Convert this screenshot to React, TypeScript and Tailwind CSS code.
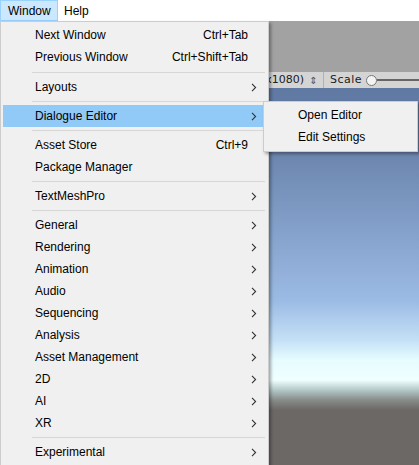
import React from "react";

type Item =
  | { type: "item"; label: string; shortcut?: string; sub?: boolean; active?: boolean }
  | { type: "sep"; h?: string };

const items: Item[] = [
  { type: "item", label: "Next Window", shortcut: "Ctrl+Tab" },
  { type: "item", label: "Previous Window", shortcut: "Ctrl+Shift+Tab" },
  { type: "sep", h: "h-[8px]" },
  { type: "item", label: "Layouts", sub: true },
  { type: "sep" },
  { type: "item", label: "Dialogue Editor", sub: true, active: true },
  { type: "sep" },
  { type: "item", label: "Asset Store", shortcut: "Ctrl+9" },
  { type: "item", label: "Package Manager" },
  { type: "sep" },
  { type: "item", label: "TextMeshPro", sub: true },
  { type: "sep" },
  { type: "item", label: "General", sub: true },
  { type: "item", label: "Rendering", sub: true },
  { type: "item", label: "Animation", sub: true },
  { type: "item", label: "Audio", sub: true },
  { type: "item", label: "Sequencing", sub: true },
  { type: "item", label: "Analysis", sub: true },
  { type: "item", label: "Asset Management", sub: true },
  { type: "item", label: "2D", sub: true },
  { type: "item", label: "AI", sub: true },
  { type: "item", label: "XR", sub: true },
  { type: "sep" },
  { type: "item", label: "Experimental", sub: true },
];

function Chevron() {
  return (
    <svg width="6" height="9" viewBox="0 0 6 9" className="block">
      <path d="M1 0.8 L4.6 4.5 L1 8.2" fill="none" stroke="#333" strokeWidth="1.1" />
    </svg>
  );
}

export default function App() {
  return (
    <div
      className="relative w-[419px] h-[465px] overflow-hidden bg-[#a2a2a2] text-[12px] text-black"
      style={{ fontFamily: '"Liberation Sans", Arial, sans-serif' }}
    >
      {/* menu bar */}
      <div className="flex h-[21px] bg-white items-stretch">
        <div className="flex items-center w-[58px] pl-[7px] bg-[#cce8ff] border border-[#99d1ff]">Window</div>
        <div className="flex items-center pl-[6px]">Help</div>
      </div>

      {/* background editor */}
      <div className="h-[51px] bg-[#a2a2a2]" />
      <div className="flex h-[16px] items-center bg-[#d4d4d4] text-[11px] text-[#202020]" style={{ fontFamily: '"DejaVu Sans", sans-serif' }}>
        <div className="w-[304px] overflow-hidden whitespace-nowrap text-right">Free Aspect (1920x1080)</div>
        <div className="w-[19px] text-center text-[10px] text-[#555]">⇕</div>
        <div className="h-full border-l border-[#b0b0b0]" />
        <div className="pl-[6px] tracking-[0.5px]">Scale</div>
        <div className="ml-[4px] w-[11px] h-[11px] rounded-full bg-[#f4f4f4] border border-[#777]" />
        <div className="flex-1 h-[2px] bg-[#666]" />
      </div>
      <div className="h-[377px] bg-[linear-gradient(to_bottom,#5f79a2_0px,#6a84ad_62px,#9bbae4_212px,#c4e0f6_252px,#e6fcff_272px,#f0ffff_292px,#b4c8c8_302px,#888c8a_312px,#6c6866_322px,#6c6866_377px)]" />

      {/* dropdown */}
      <div className="absolute left-0 top-[21px] w-[269px] h-[460px] bg-[#f0f0f0] border border-[#cccccc] pt-[2px] px-[2px] shadow-[2px_2px_3px_rgba(0,0,0,0.35)]">
        {items.map((it, i) =>
          it.type === "sep" ? (
            <div key={i} className={`${it.h ?? "h-[7px]"} flex items-center pl-[29px] pr-[1px]`}>
              <div className="h-px w-full bg-[#d7d7d7]" />
            </div>
          ) : (
            <div
              key={i}
              className={`h-[22px] flex items-center pl-[32px] pr-[9px] ${it.active ? "bg-[#91c9f7]" : ""}`}
            >
              <span className="flex-1 whitespace-nowrap">{it.label}</span>
              {it.shortcut && <span className="mr-[9px] whitespace-nowrap">{it.shortcut}</span>}
              {it.sub && <Chevron />}
            </div>
          )
        )}
      </div>

      {/* submenu */}
      <div className="absolute left-[263px] top-[101px] w-[155px] h-[51px] bg-[#f0f0f0] border border-[#cccccc] py-[2px] shadow-[2px_2px_3px_rgba(0,0,0,0.35)]">
        <div className="h-[22px] flex items-center pl-[34px]">Open Editor</div>
        <div className="h-[22px] flex items-center pl-[34px]">Edit Settings</div>
      </div>
    </div>
  );
}
